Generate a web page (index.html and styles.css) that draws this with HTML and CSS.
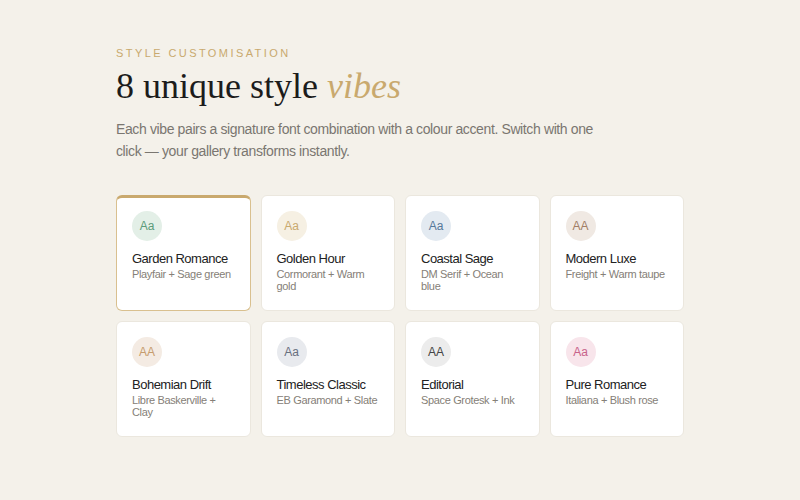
FILE: index.html
```html
<!DOCTYPE html>
<html>
<head>
<meta charset="utf-8">
<link rel="stylesheet" href="styles.css">
</head>
<body>
<section class="wrap">
  <div class="eyebrow">STYLE CUSTOMISATION</div>
  <h1 class="title">8 unique style <em>vibes</em></h1>
  <p class="lead">Each vibe pairs a signature font combination with a colour accent. Switch with one click — your gallery transforms instantly.</p>
  <div class="grid">
    <div class="card selected">
      <div class="badge garden">Aa</div>
      <div class="name">Garden Romance</div>
      <div class="sub">Playfair + Sage green</div>
    </div>
    <div class="card">
      <div class="badge golden">Aa</div>
      <div class="name">Golden Hour</div>
      <div class="sub">Cormorant + Warm gold</div>
    </div>
    <div class="card">
      <div class="badge coastal">Aa</div>
      <div class="name">Coastal Sage</div>
      <div class="sub">DM Serif + Ocean blue</div>
    </div>
    <div class="card">
      <div class="badge luxe">AA</div>
      <div class="name">Modern Luxe</div>
      <div class="sub">Freight + Warm taupe</div>
    </div>
    <div class="card">
      <div class="badge boho">AA</div>
      <div class="name">Bohemian Drift</div>
      <div class="sub">Libre Baskerville + Clay</div>
    </div>
    <div class="card">
      <div class="badge classic">Aa</div>
      <div class="name">Timeless Classic</div>
      <div class="sub">EB Garamond + Slate</div>
    </div>
    <div class="card">
      <div class="badge editorial">AA</div>
      <div class="name">Editorial</div>
      <div class="sub">Space Grotesk + Ink</div>
    </div>
    <div class="card">
      <div class="badge rose">Aa</div>
      <div class="name">Pure Romance</div>
      <div class="sub">Italiana + Blush rose</div>
    </div>
  </div>
</section>
</body>
</html>
```

FILE: styles.css
```css
* { box-sizing: border-box; }
html, body { margin: 0; padding: 0; }
body {
  background: #f4f1ea;
  font-family: "Liberation Sans", Arial, sans-serif;
  color: #222;
}
.wrap {
  width: 568px;
  margin-left: 116px;
  padding-top: 47px;
}
.eyebrow {
  font-size: 11px;
  letter-spacing: 0.22em;
  color: #c9a96e;
  line-height: 13px;
}
.title {
  font-family: "Liberation Serif", "Times New Roman", serif;
  font-weight: normal;
  font-size: 36px;
  line-height: 40px;
  margin: 6px 0 0;
  color: #1c1c1c;
}
.title em {
  color: #c9a96e;
  font-style: italic;
}
.lead {
  margin: 12px 0 0;
  max-width: 490px;
  font-size: 14px;
  letter-spacing: -0.38px;
  line-height: 22px;
  color: #7a7670;
}
.grid {
  margin-top: 33px;
  display: grid;
  grid-template-columns: repeat(4, 1fr);
  gap: 10px;
}
.card {
  background: #fff;
  border: 1px solid #ebe7de;
  border-radius: 6px;
  padding: 15px 15px 14px;
  min-height: 116px;
}
.card.selected {
  border: 1px solid #d9c08f;
  border-top: 3px solid #c9a96e;
  padding-top: 13px;
}
.badge {
  width: 30px;
  height: 30px;
  border-radius: 50%;
  display: flex;
  align-items: center;
  justify-content: center;
  font-size: 12px;
}
.garden { background: #e3efe7; color: #5c9c7a; }
.golden { background: #f6f0e3; color: #c9a96e; }
.coastal { background: #e3eaf1; color: #56799a; }
.luxe { background: #f0e9e3; color: #a27e66; }
.boho { background: #f4ebe3; color: #c69c6d; }
.classic { background: #e8eaee; color: #68707f; }
.editorial { background: #ececec; color: #444; }
.rose { background: #f8e5eb; color: #c8638a; }
.name {
  margin-top: 10px;
  font-size: 13px;
  letter-spacing: -0.5px;
  line-height: 16px;
  color: #222;
}
.sub {
  margin-top: 1px;
  font-size: 11px;
  letter-spacing: -0.35px;
  line-height: 12px;
  color: #858077;
}
```
